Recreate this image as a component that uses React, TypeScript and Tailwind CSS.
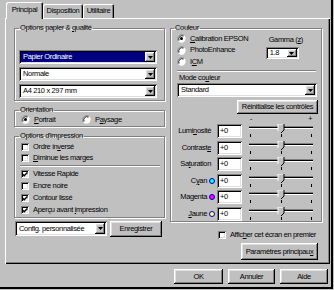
import type { ReactNode } from "react"

const raised =
  "shadow-[inset_-1px_-1px_0_#000,inset_1px_1px_0_#fff,inset_-2px_-2px_0_#808080,inset_2px_2px_0_#dfdfdf]"
const sunken =
  "shadow-[inset_1px_1px_0_#808080,inset_-1px_-1px_0_#fff,inset_2px_2px_0_#000,inset_-2px_-2px_0_#dfdfdf]"
const etched = "border border-[#808080] shadow-[1px_1px_0_#fff,inset_1px_1px_0_#fff]"

function Arrow() {
  return (
    <svg width="5" height="3" viewBox="0 0 5 3">
      <polygon points="0,0 5,0 2.5,3" fill="#000" />
    </svg>
  )
}

function Select({
  value,
  className,
  selected,
}: {
  value: string
  className: string
  selected?: boolean
}) {
  return (
    <div className={`flex bg-white p-[2px] ${sunken} ${className}`}>
      <div className="flex min-w-0 flex-1 items-stretch">
        <span
          className={
            selected
              ? "flex w-full items-center bg-[#000080] px-[2px] text-white"
              : "flex items-center px-[2px]"
          }
        >
          {value}
        </span>
      </div>
      <div className={`flex w-[10px] items-center justify-center bg-[#c0c0c0] ${raised}`}>
        <Arrow />
      </div>
    </div>
  )
}

function Button({ children, className }: { children: ReactNode; className: string }) {
  return (
    <div className={`flex items-center justify-center bg-[#c0c0c0] ${raised} ${className}`}>
      {children}
    </div>
  )
}

function Radio({ checked }: { checked?: boolean }) {
  return (
    <svg width="9" height="9" viewBox="0 0 12 12" className="shrink-0">
      <circle cx="6" cy="6" r="5.5" fill="#fff" />
      <path d="M1.8 9.5 A5.5 5.5 0 0 1 9.5 1.8" stroke="#808080" strokeWidth="1.2" fill="none" />
      <path d="M2.8 8.5 A4.2 4.2 0 0 1 8.5 2.8" stroke="#000" strokeWidth="1.2" fill="none" />
      {checked && <circle cx="6" cy="6" r="2" fill="#000" />}
    </svg>
  )
}

function Check({ checked }: { checked?: boolean }) {
  return (
    <div className={`flex h-[8px] w-[8px] shrink-0 items-center justify-center bg-white ${sunken}`}>
      {checked && (
        <svg width="6" height="5" viewBox="0 0 7 6">
          <path d="M0.5 2.5 L2.5 4.5 L6.5 0.5" stroke="#000" strokeWidth="1.6" fill="none" />
        </svg>
      )}
    </div>
  )
}

function CheckRow({ label, checked, h }: { label: ReactNode; checked?: boolean; h: string }) {
  return (
    <div className={`flex items-center gap-[4px] ${h}`}>
      <Check checked={checked} />
      <span>{label}</span>
    </div>
  )
}

function Slider() {
  return (
    <svg width="64" height="14" viewBox="0 0 64 14" className="shrink-0">
      <rect x="0" y="2" width="64" height="1" fill="#808080" />
      <rect x="0" y="3" width="64" height="1" fill="#000" />
      <rect x="0" y="4" width="64" height="1" fill="#fff" />
      <polygon points="29,0 35,0 35,6 32,9 29,6" fill="#c0c0c0" />
      <path d="M29 7 L29 0 L35 0" stroke="#fff" strokeWidth="1" fill="none" />
      <path d="M35 0 L35 6 L32 9" stroke="#000" strokeWidth="1" fill="none" />
      <rect x="1" y="10" width="1" height="3" fill="#000" />
      <rect x="32" y="10" width="1" height="3" fill="#000" />
      <rect x="62" y="10" width="1" height="3" fill="#000" />
    </svg>
  )
}

function Dot({ color }: { color: string }) {
  return <span className={`h-[6px] w-[6px] shrink-0 rounded-full border border-[#0000c0] ${color}`} />
}

function AdjustRow({ label, dot, mt }: { label: ReactNode; dot?: string; mt: string }) {
  return (
    <div className={`flex h-[14px] items-center ${mt}`}>
      <div className={`flex w-[38px] items-center justify-end gap-[2px] ${dot ? "" : "pr-[4px]"}`}>
        <span>{label}</span>
        {dot && <Dot color={dot} />}
      </div>
      <div className={`ml-[2px] flex h-[14px] w-[25px] items-center bg-white pl-[3px] ${sunken}`}>
        +0
      </div>
      <div className="ml-[7px]">
        <Slider />
      </div>
    </div>
  )
}

function Tab({ label, active, w }: { label: string; active?: boolean; w: string }) {
  return (
    <div
      className={`flex items-center justify-center rounded-t-[2px] bg-[#c0c0c0] shadow-[inset_1px_1px_0_#fff,inset_-1px_0_0_#000,inset_-2px_0_0_#808080] ${w} ${
        active ? "relative z-10 mb-[-1px] h-[17px] pb-[2px]" : "h-[14px]"
      }`}
    >
      {label}
    </div>
  )
}

export default function App() {
  return (
    <div className="h-[290px] w-[334px] whitespace-nowrap bg-[#c0c0c0] pl-[5px] pt-[2px] font-['Liberation_Sans',Arial,sans-serif] text-[7.5px] leading-[10px] tracking-[-0.35px] text-black shadow-[inset_-1px_-1px_0_#c0c0c0,inset_-3px_-3px_0_#000]">
      <div className="ml-[1px] flex h-[16px] items-end">
        <Tab label="Principal" active w="w-[37px]" />
        <Tab label="Disposition" w="w-[40px]" />
        <Tab label="Utilitaire" w="w-[31px]" />
      </div>

      <div className="flex h-[246px] w-[325px] gap-[5px] pl-[9px] pt-[5px] shadow-[inset_1px_1px_0_#fff,inset_-1px_-1px_0_#000,inset_-2px_-2px_0_#808080]">
        {/* colonne gauche */}
        <div className="flex w-[151px] flex-col">
          <fieldset className={`${etched} pb-[2px] pl-[4px]`}>
            <legend className="px-[1px]">
              Options papier &amp; <u>q</u>ualité
            </legend>
            <div className="flex flex-col gap-[3px] pt-[17px]">
              <Select value="Papier Ordinaire" selected className="h-[14px] w-[138px]" />
              <Select value="Normale" className="h-[14px] w-[138px]" />
              <Select value="A4 210 x 297 mm" className="h-[14px] w-[138px]" />
            </div>
          </fieldset>

          <fieldset className={`${etched} mt-[4px] pb-[2px] pl-[4px]`}>
            <legend className="px-[1px]">Orientation</legend>
            <div className="flex h-[9px] items-center pl-[2px]">
              <div className="flex w-[61px] items-center gap-[4px]">
                <Radio checked />
                <span>
                  <u>P</u>ortrait
                </span>
              </div>
              <div className="flex items-center gap-[4px]">
                <Radio />
                <span>
                  P<u>a</u>ysage
                </span>
              </div>
            </div>
          </fieldset>

          <fieldset className={`${etched} mt-[4px] pb-[1px] pl-[4px]`}>
            <legend className="px-[1px]">Options d'impression</legend>
            <div className="flex flex-col pl-[2px]">
              <CheckRow
                h="h-[11px]"
                label={
                  <>
                    Ordre in<u>v</u>ersé
                  </>
                }
              />
              <CheckRow
                h="h-[11px]"
                label={
                  <>
                    <u>D</u>iminue les marges
                  </>
                }
              />
            </div>
            <div className="mb-[1px] ml-[1px] mr-[4px] mt-[2px] h-[2px] border-b border-t border-b-white border-t-[#808080]" />
            <div className="flex flex-col pl-[2px]">
              <CheckRow h="h-[12px]" checked label="Vitesse Rapide" />
              <CheckRow h="h-[12px]" label="Encre noire" />
              <CheckRow h="h-[12px]" checked label="Contour lissé" />
              <CheckRow
                h="h-[12px]"
                checked
                label={
                  <>
                    Aperçu avant <u>i</u>mpression
                  </>
                }
              />
            </div>
          </fieldset>

          <div className="ml-[1px] mt-[3px] flex items-start gap-[3px]">
            <Select value="Config. personnalisée" className="h-[15px] w-[92px]" />
            <Button className="h-[16px] w-[52px]">
              <span>
                Enre<u>g</u>istrer
              </span>
            </Button>
          </div>
        </div>

        {/* colonne droite */}
        <div className="flex w-[152px] flex-col">
          <fieldset className={`${etched} pl-[3px] pr-[3px]`}>
            <legend className="px-[1px]">Couleur</legend>
            <div className="flex flex-col pl-[3px]">
              <div className="flex">
                <div className="flex flex-col">
                  <div className="flex h-[11px] items-center gap-[4px]">
                    <Radio checked />
                    <span>
                      <u>C</u>alibration EPSON
                    </span>
                  </div>
                  <div className="flex h-[12px] items-center gap-[4px]">
                    <Radio />
                    <span>PhotoEnhance</span>
                  </div>
                  <div className="flex h-[11px] items-center gap-[4px]">
                    <Radio />
                    <span>
                      I<u>C</u>M
                    </span>
                  </div>
                </div>
                <div className="ml-auto mr-[15px] flex flex-col pt-[2px]">
                  <span className="pl-[3px]">
                    Gamma (<u>z</u>)
                  </span>
                  <Select value="1.8" className="mt-[2px] h-[12px] w-[33px]" />
                </div>
              </div>
              <div className="mr-[2px] mt-[3px] h-[2px] border-b border-t border-b-white border-t-[#808080]" />
              <span className="mt-[1px] pl-[2px]">
                Mode co<u>u</u>leur
              </span>
              <Select value="Standard" className="h-[14px] w-[140px]" />
              <Button className="ml-auto mt-[3px] h-[14px] w-[81px]">Réinitialise les contrôles</Button>
              <div className="ml-[72px] mt-[1px] flex h-[8px] w-[64px] items-center justify-between px-[1px] text-[7px] leading-[8px]">
                <span>-</span>
                <span>+</span>
              </div>
              <AdjustRow
                mt="mt-[1px]"
                label={
                  <>
                    Lumi<u>n</u>osité
                  </>
                }
              />
              <AdjustRow
                mt="mt-[3px]"
                label={
                  <>
                    Contrast<u>e</u>
                  </>
                }
              />
              <AdjustRow
                mt="mt-[2px]"
                label={
                  <>
                    Sa<u>t</u>uration
                  </>
                }
              />
              <AdjustRow
                mt="mt-[3px]"
                dot="bg-[#00ffff]"
                label={
                  <>
                    C<u>y</u>an
                  </>
                }
              />
              <AdjustRow mt="mt-[2px]" dot="bg-[#ff00ff]" label="Magenta" />
              <AdjustRow
                mt="mt-[3px]"
                dot="bg-[#ffff80]"
                label={
                  <>
                    <u>J</u>aune
                  </>
                }
              />
            </div>
          </fieldset>

          <div className="ml-auto mr-[6px] mt-[8px] flex h-[10px] items-center gap-[4px]">
            <Check />
            <span>
              Affic<u>h</u>er cet écran en premier
            </span>
          </div>
          <Button className="ml-auto mr-[4px] mt-[3px] h-[17px] w-[77px]">
            <span>
              Paramètres principau<u>x</u>
            </span>
          </Button>
        </div>
      </div>

      <div className="mt-[5px] flex justify-end gap-[5px] pr-[6px]">
        <Button className="h-[15px] w-[49px]">OK</Button>
        <Button className="h-[15px] w-[47px]">Annuler</Button>
        <Button className="h-[15px] w-[48px]">Aide</Button>
      </div>
    </div>
  )
}
